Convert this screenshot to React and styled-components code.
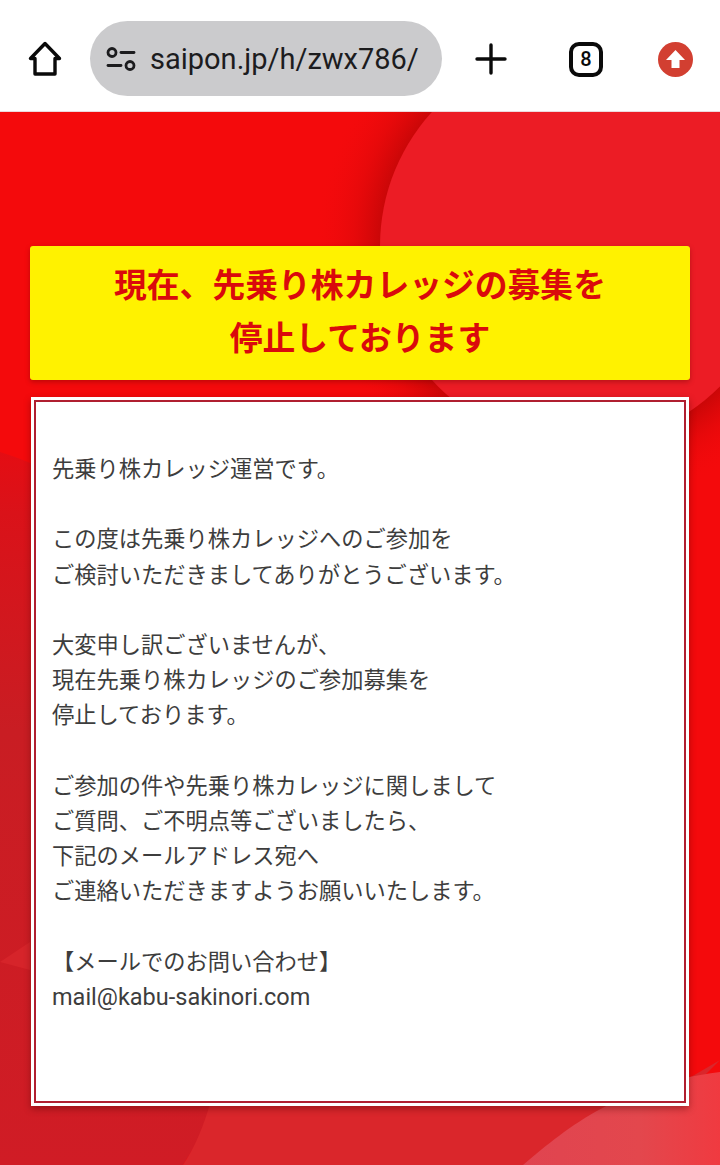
import React from 'react';
import styled, { createGlobalStyle } from 'styled-components';

const GlobalStyle = createGlobalStyle`
  html, body {
    margin: 0;
    padding: 0;
    background: #f40a0c;
  }
  * {
    box-sizing: border-box;
  }
`;

const Page = styled.div`
  position: relative;
  width: 720px;
  height: 1165px;
  overflow: hidden;
  font-family: Roboto, "Noto Sans CJK JP", sans-serif;
`;

const Toolbar = styled.header`
  position: relative;
  z-index: 1;
  height: 112px;
  background: #fff;
  border-bottom: 1px solid #ecd9dc;
  display: grid;
  grid-template-columns: 90px 352px 98px 92px 86px;
  align-items: center;
  justify-items: center;
  padding-top: 7px;
`;

const UrlPill = styled.div`
  width: 352px;
  height: 75px;
  margin-bottom: 1px;
  border-radius: 38px;
  background: #cbcbcd;
  display: flex;
  align-items: center;
  gap: 14px;
  padding-left: 16px;
  color: #1c1c1e;
  font-size: 29px;
  white-space: nowrap;
`;

const TabCount = styled.div`
  width: 34px;
  height: 35px;
  border: 4px solid #0a0a0a;
  border-radius: 10px;
  display: flex;
  align-items: center;
  justify-content: center;
  color: #0a0a0a;
  font-size: 20px;
  font-weight: 500;
`;

const Backdrop = styled.svg`
  position: absolute;
  left: 0;
  top: 0;
`;

const Main = styled.main`
  position: relative;
  padding: 134px 30px 0;
`;

const Banner = styled.div`
  height: 134px;
  border-radius: 3px;
  background: #fff200;
  box-shadow: 0 2px 5px rgba(90, 0, 0, 0.35);
  display: flex;
  align-items: center;
  justify-content: center;
  text-align: center;
  color: #da0a0c;
  font-size: 32.8px;
  font-weight: 700;
  line-height: 53px;
`;

const MessageBox = styled.section`
  height: 709px;
  margin: 17px 1px 0;
  background: #fff;
  padding: 3px;
  box-shadow: 0 3px 7px rgba(70, 0, 0, 0.4);
`;

const MessageInner = styled.div`
  height: 100%;
  border: 2px solid #b01f30;
  padding: 50px 16px 0;
  color: #3d3d3d;
  font-size: 22.25px;
  line-height: 35.2px;
`;

const Paragraph = styled.p`
  margin: 0 0 35.2px;
`;

const Line = styled.span`
  display: block;
  white-space: nowrap;
  font-size: ${(props) => (props.$latin ? '23.5px' : 'inherit')};
`;

const paragraphs = [
  ['先乗り株カレッジ運営です。'],
  ['この度は先乗り株カレッジへのご参加を', 'ご検討いただきましてありがとうございます。'],
  ['大変申し訳ございませんが、', '現在先乗り株カレッジのご参加募集を', '停止しております。'],
  [
    'ご参加の件や先乗り株カレッジに関しまして',
    'ご質問、ご不明点等ございましたら、',
    '下記のメールアドレス宛へ',
    'ご連絡いただきますようお願いいたします。',
  ],
  ['【メールでのお問い合わせ】', 'mail@kabu-sakinori.com'],
];

const HomeIcon = () => (
  <svg width="36" height="36" viewBox="0 0 36 36" fill="none" stroke="#0a0a0a" strokeWidth="3.4" strokeLinejoin="round" strokeLinecap="round">
    <path d="M18 2.5 3.5 17.5h4.5v15.5h20V17.5h4.5Z" />
  </svg>
);

const SettingsIcon = () => (
  <svg width="30" height="26" viewBox="0 0 30 26" fill="none" stroke="#1c1c1e" strokeWidth="2.8" strokeLinecap="round">
    <circle cx="6" cy="6.5" r="4" />
    <path d="M15 6.5h13" />
    <path d="M2 19.5h13" />
    <circle cx="24" cy="19.5" r="4" />
  </svg>
);

const PlusIcon = () => (
  <svg width="32" height="32" viewBox="0 0 32 32" stroke="#0a0a0a" strokeWidth="3.4" strokeLinecap="round">
    <path d="M16 2v28M2 16h28" />
  </svg>
);

const UpdateIcon = () => (
  <svg width="35" height="35" viewBox="0 0 35 35">
    <circle cx="17.5" cy="17.5" r="17.5" fill="#d23f31" />
    <path d="M17.5 8 8 18h5.5v8h8v-8H27Z" fill="#fff" />
  </svg>
);

// decorative curves behind the cards
const BackgroundArt = () => (
  <Backdrop width="720" height="1165" viewBox="0 0 720 1165">
    <defs>
      <radialGradient id="circleShade" gradientUnits="userSpaceOnUse" cx="579" cy="246" r="265">
        <stop offset="0.74" stopColor="#a80404" stopOpacity="0.6" />
        <stop offset="0.85" stopColor="#c00606" stopOpacity="0.25" />
        <stop offset="1" stopColor="#f40a0c" stopOpacity="0" />
      </radialGradient>
      <linearGradient id="leftBand" x1="0" y1="440" x2="0" y2="1165" gradientUnits="userSpaceOnUse">
        <stop offset="0" stopColor="#e60c12" />
        <stop offset="0.1" stopColor="#da1219" />
        <stop offset="0.4" stopColor="#c91d23" />
        <stop offset="1" stopColor="#d01c25" />
      </linearGradient>
      <linearGradient id="cornerBand" x1="520" y1="0" x2="720" y2="0" gradientUnits="userSpaceOnUse">
        <stop offset="0" stopColor="#e04450" />
        <stop offset="0.6" stopColor="#e3474d" />
        <stop offset="1" stopColor="#f03a40" />
      </linearGradient>
    </defs>
    <rect width="720" height="1165" fill="#f40a0c" />
    <circle cx="579" cy="246" r="265" fill="url(#circleShade)" />
    <circle cx="579" cy="246" r="199" fill="#ec1c25" />
    <path d="M0 452C60 470 140 520 200 620L211 1110Q200 1140 183 1165H0Z" fill="url(#leftBand)" />
    <path d="M0 962 30 942V970Z" fill="#d6242a" />
    <path d="M211 1100Q200 1140 183 1165H540L720 1060 680 1100Z" fill="#da262b" />
    <path d="M523 1165C570 1125 620 1085 720 1072V1165Z" fill="url(#cornerBand)" />
  </Backdrop>
);

const App = () => (
  <Page>
    <GlobalStyle />
    <BackgroundArt />
    <Toolbar>
      <HomeIcon />
      <UrlPill>
        <SettingsIcon />
        saipon.jp/h/zwx786/
      </UrlPill>
      <PlusIcon />
      <TabCount>8</TabCount>
      <UpdateIcon />
    </Toolbar>
    <Main>
      <Banner>
        現在、先乗り株カレッジの募集を
        <br />
        停止しております
      </Banner>
      <MessageBox>
        <MessageInner>
          {paragraphs.map((lines) => (
            <Paragraph key={lines[0]}>
              {lines.map((line) => (
                <Line key={line} $latin={line.startsWith('mail@')}>
                  {line}
                </Line>
              ))}
            </Paragraph>
          ))}
        </MessageInner>
      </MessageBox>
    </Main>
  </Page>
);

export default App;
